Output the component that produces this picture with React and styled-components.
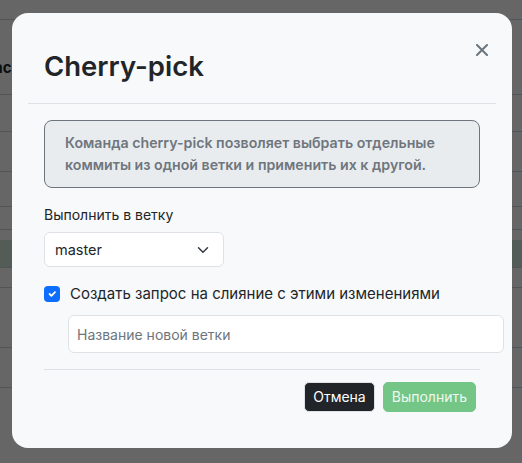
import React from "react";
import styled, { createGlobalStyle } from "styled-components";

const GlobalStyle = createGlobalStyle`
  html, body {
    margin: 0;
    padding: 0;
  }
  body {
    font-family: Inter, "Noto Sans", "Liberation Sans", sans-serif;
    color: #212529;
    background: #ffffff;
  }
`;

const rows = [
  { h: 20 },
  { h: 75, text: "ac" },
  { h: 37 },
  { h: 40 },
  { h: 35 },
  { h: 23 },
  { h: 10, plain: true },
  { h: 28, green: true },
  { h: 20 },
  { h: 60 },
  { h: 40 },
];

const App = () => {
  return (
    <>
      <GlobalStyle />
      <Screen>
        <Page>
          {rows.map((r, i) => (
            <PageRow key={i} $h={r.h} $green={r.green} $plain={r.plain}>
              {r.text && <PageText>{r.text}</PageText>}
            </PageRow>
          ))}
        </Page>
        <Backdrop>
          <Modal>
            <Header>
              <Title>Cherry-pick</Title>
              <CloseButton aria-label="Закрыть">
                <svg width="12" height="12" viewBox="0 0 12 12">
                  <path
                    d="M1 1L11 11M11 1L1 11"
                    stroke="#6c757d"
                    strokeWidth="2"
                    strokeLinecap="round"
                  />
                </svg>
              </CloseButton>
            </Header>
            <Body>
              <Info>
                Команда cherry-pick позволяет выбрать отдельные коммиты из
                одной ветки и применить их к другой.
              </Info>
              <Label>Выполнить в ветку</Label>
              <Select>
                <span>master</span>
                <svg width="16" height="12" viewBox="0 0 16 16">
                  <path
                    d="M2 5l6 6 6-6"
                    fill="none"
                    stroke="#343a40"
                    strokeWidth="2"
                    strokeLinecap="round"
                    strokeLinejoin="round"
                  />
                </svg>
              </Select>
              <CheckRow>
                <CheckBox>
                  <svg width="12" height="12" viewBox="0 0 20 20">
                    <path
                      d="M6 10l3 3l6-6"
                      fill="none"
                      stroke="#fff"
                      strokeWidth="3"
                      strokeLinecap="round"
                      strokeLinejoin="round"
                    />
                  </svg>
                </CheckBox>
                <CheckLabel>Создать запрос на слияние с этими изменениями</CheckLabel>
              </CheckRow>
              <BranchInput type="text" placeholder="Название новой ветки" />
            </Body>
            <Footer>
              <Button $variant="dark">Отмена</Button>
              <Button $variant="success">Выполнить</Button>
            </Footer>
          </Modal>
        </Backdrop>
      </Screen>
    </>
  );
};

const Screen = styled.div`
  position: relative;
  width: 522px;
  height: 463px;
  overflow: hidden;
`;

const Page = styled.div`
  display: flex;
  flex-direction: column;
`;

const PageRow = styled.div`
  height: ${(p) => p.$h}px;
  box-sizing: border-box;
  border-bottom: ${(p) => (p.$plain ? "none" : "1px solid #cfd3d7")};
  background: ${(p) => (p.$green ? "#cfe6d6" : "#ffffff")};
  display: flex;
  align-items: center;
`;

const PageText = styled.span`
  font-size: 15px;
  font-weight: 700;
  color: #212529;
  margin-left: -6px;
  margin-top: 20px;
`;

const Backdrop = styled.div`
  position: absolute;
  inset: 0;
  background: rgba(0, 0, 0, 0.6);
  padding: 13px 10px 0 12px;
`;

const Modal = styled.div`
  width: 500px;
  height: 435px;
  box-sizing: border-box;
  background: #f8f9fa;
  border-radius: 16px;
  display: flex;
  flex-direction: column;
`;

const Header = styled.div`
  display: flex;
  align-items: flex-start;
  justify-content: space-between;
  margin: 0 16px;
  padding: 36px 4px 19px 16px;
  border-bottom: 1px solid #dee2e6;
`;

const Title = styled.h1`
  margin: 0;
  font-size: 27.5px;
  font-weight: 600;
  line-height: 35px;
  color: #212529;
`;

const CloseButton = styled.button`
  border: none;
  background: transparent;
  padding: 0;
  width: 20px;
  height: 20px;
  margin-top: -9px;
  display: flex;
  align-items: center;
  justify-content: center;
  cursor: pointer;
`;

const Body = styled.div`
  padding: 16px 32px 16px;
  display: flex;
  flex-direction: column;
  align-items: flex-start;
`;

const Info = styled.div`
  box-sizing: border-box;
  width: 100%;
  padding: 11px 20px;
  background: #e9ecef;
  border: 1px solid #6c757d;
  border-radius: 8px;
  color: #6f767d;
  font-size: 14.2px;
  font-weight: 600;
  line-height: 22px;
`;

const Label = styled.div`
  margin-top: 16px;
  margin-bottom: 7px;
  font-size: 14px;
  line-height: 21px;
  color: #212529;
`;

const Select = styled.div`
  box-sizing: border-box;
  width: 180px;
  height: 35px;
  padding: 0 12px 0 10px;
  display: flex;
  align-items: center;
  justify-content: space-between;
  background: #ffffff;
  border: 1px solid #dee2e6;
  border-radius: 6px;
  font-size: 14.5px;
  color: #212529;
`;

const CheckRow = styled.div`
  margin-top: 16px;
  display: flex;
  align-items: center;
  gap: 10px;
`;

const CheckBox = styled.span`
  width: 16px;
  height: 16px;
  border-radius: 4px;
  background: #0d6efd;
  display: flex;
  align-items: center;
  justify-content: center;
`;

const CheckLabel = styled.span`
  font-size: 15px;
  line-height: 21px;
  color: #212529;
`;

const BranchInput = styled.input`
  box-sizing: border-box;
  width: 100%;
  height: 38px;
  margin: 11px 0 0 24px;
  flex-shrink: 0;
  padding: 0 8px;
  background: #ffffff;
  border: 1px solid #dee2e6;
  border-radius: 6px;
  font-family: inherit;
  font-size: 14px;
  color: #212529;
  outline: none;
  &::placeholder {
    color: #6c757d;
  }
`;

const Footer = styled.div`
  margin: 0 32px;
  padding: 8px 0 0;
  border-top: 1px solid #dee2e6;
  display: flex;
  justify-content: flex-end;
`;

const Button = styled.button`
  margin: 4px;
  padding: 3px 8px;
  border-radius: 5px;
  font-family: inherit;
  font-size: 14px;
  line-height: 22px;
  cursor: pointer;
  border: 1px solid ${(p) => (p.$variant === "dark" ? "#dee2e6" : "#74c687")};
  background: ${(p) => (p.$variant === "dark" ? "#212529" : "#74c687")};
  color: ${(p) => (p.$variant === "dark" ? "#ffffff" : "#eef9f0")};
`;

export default App;
